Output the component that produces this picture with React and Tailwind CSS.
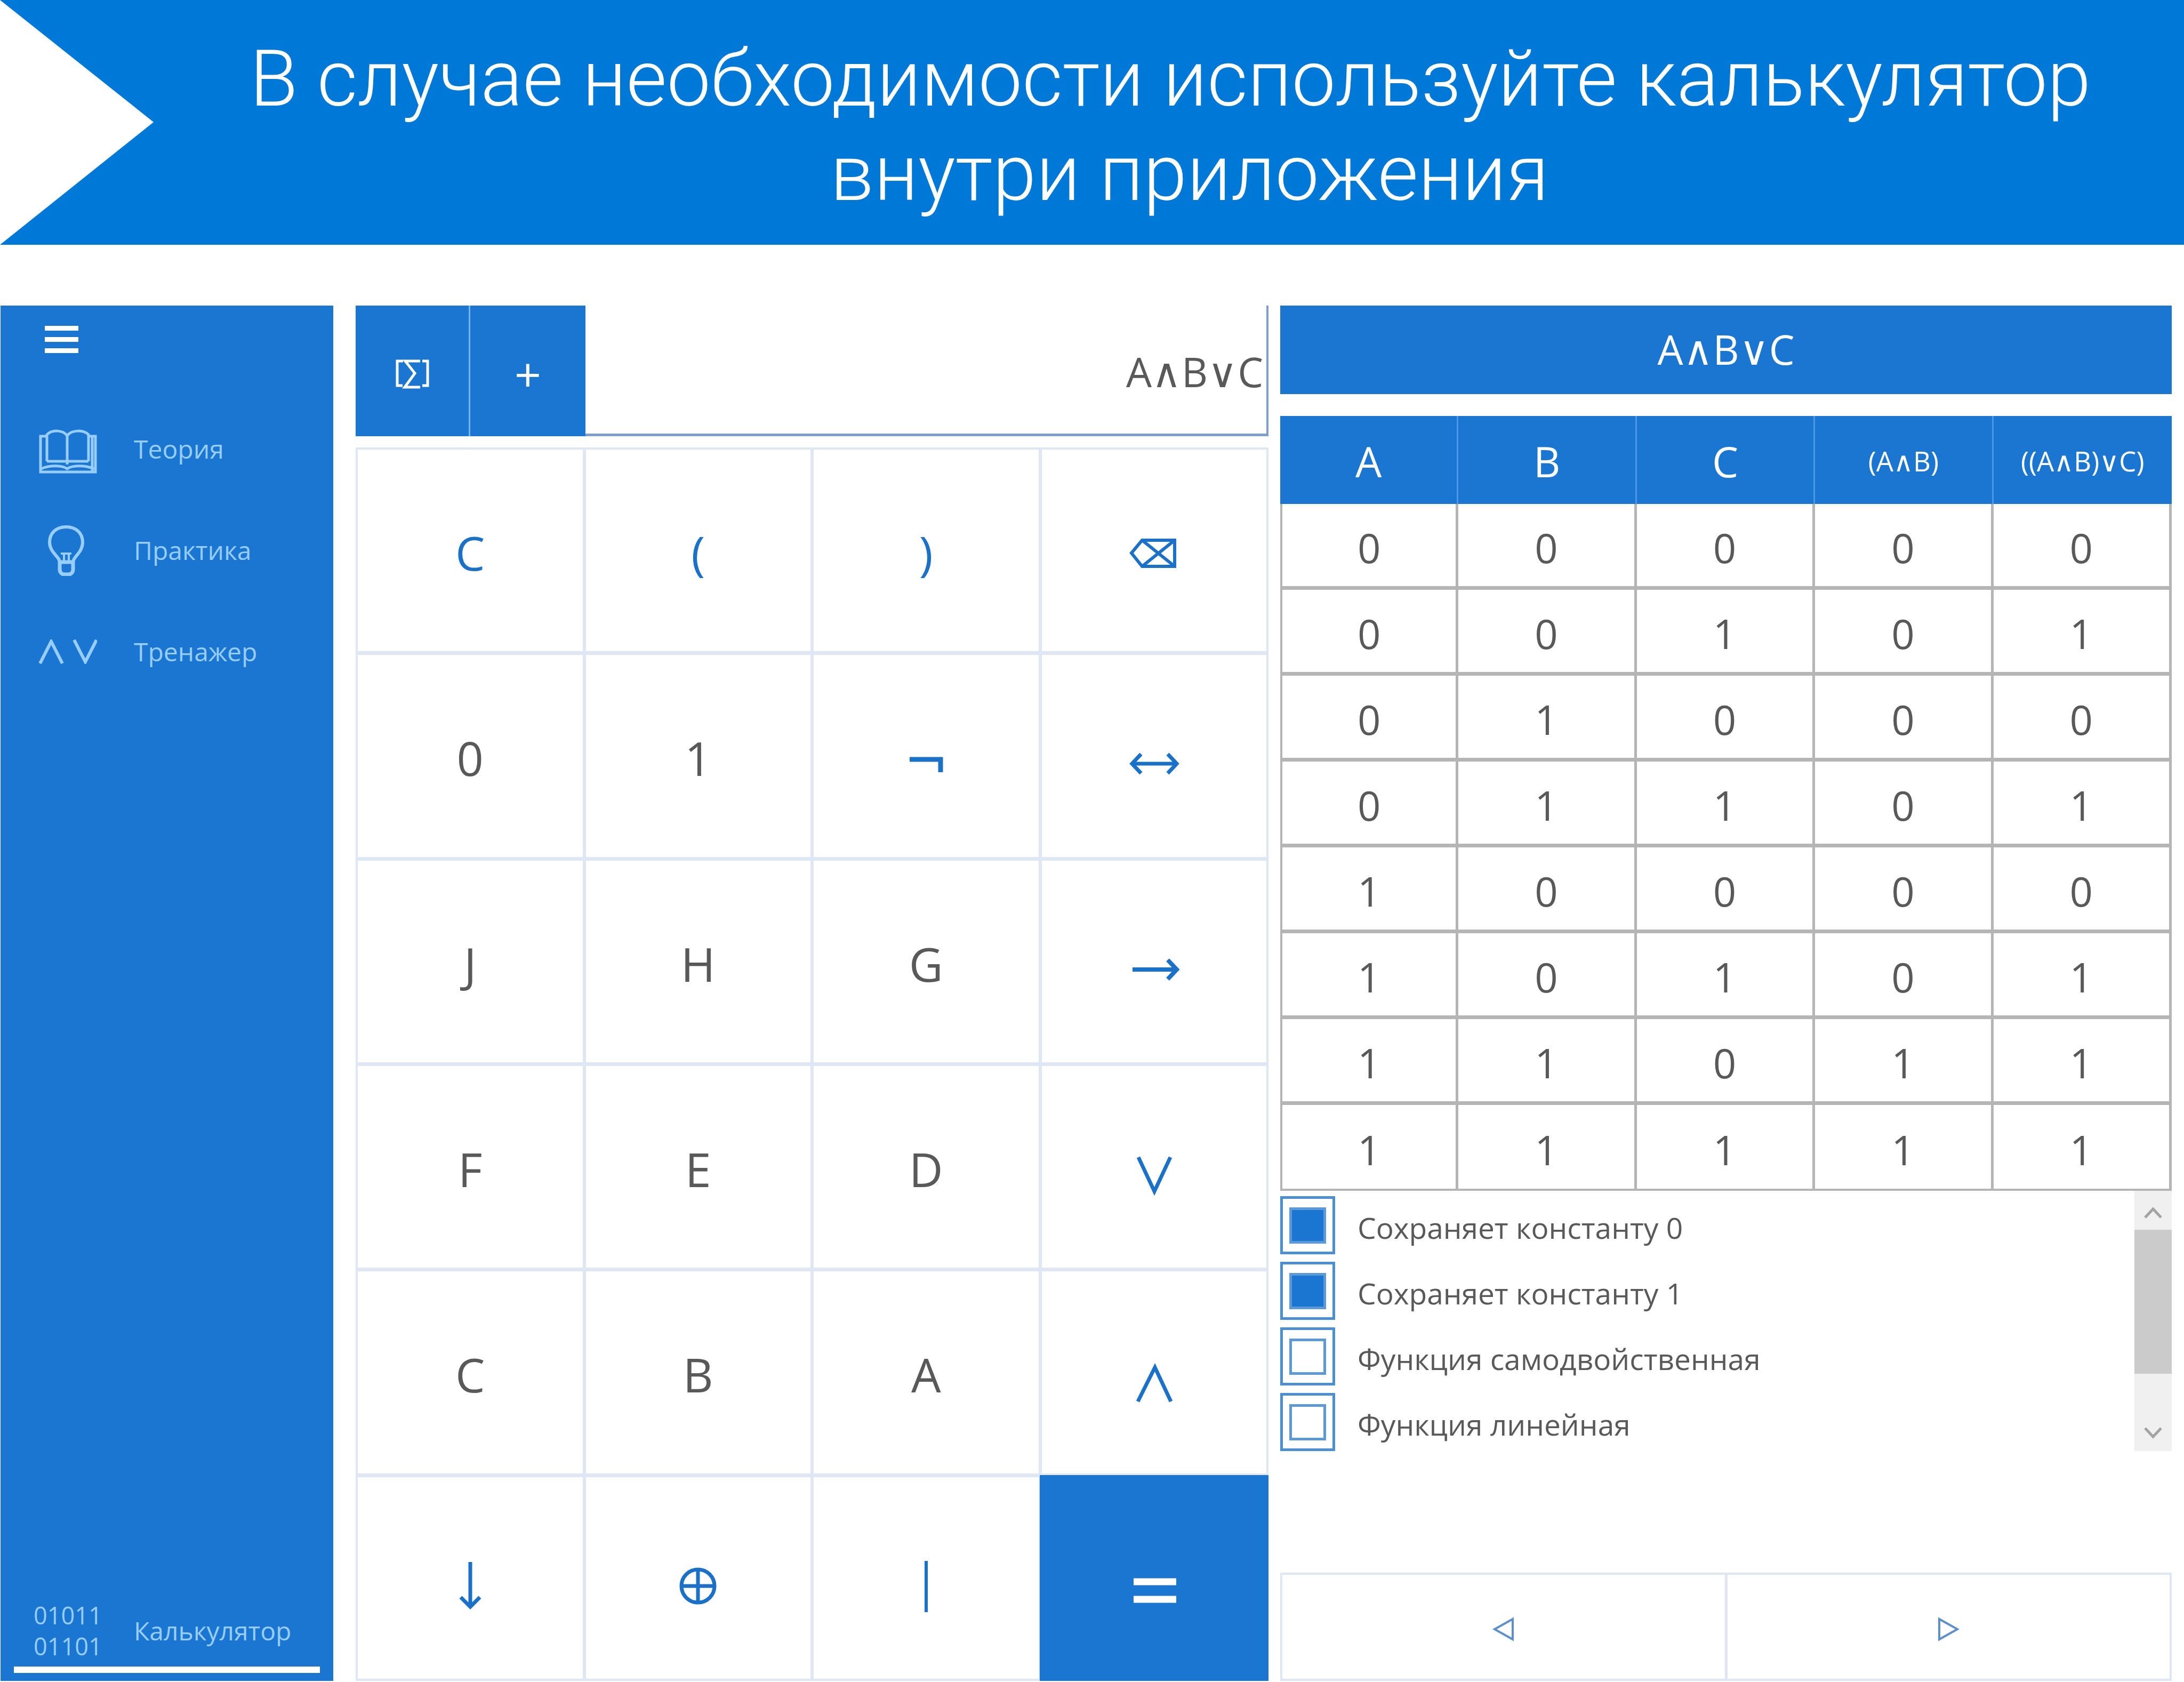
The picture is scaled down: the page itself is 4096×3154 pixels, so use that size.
import React, { useState } from "react";

/* ---------- icons ---------- */

function BookIcon() {
  return (
    <svg viewBox="0 -10 110 94" className="w-[110px] h-[94px]" fill="none" stroke="currentColor" strokeWidth="5">
      <path d="M16 60V10C26 0 46 1 54 12C62 1 84 0 94 10V60" />
      <path d="M54 12V66M16 60H94" />
      <path d="M16 13H4V80H107V13H94M101 13V80" />
      <path d="M5 74C24 66 46 68 54 74C62 68 84 66 105 74" />
    </svg>
  );
}

function BulbIcon() {
  return (
    <svg viewBox="0 0 110 96" className="w-[110px] h-[96px]" fill="none" stroke="currentColor" strokeWidth="6">
      <path d="M40 70C40 60 21 52 21 33C21 15 34 4 52 4S83 15 83 33C83 52 65 60 65 70" />
      <path d="M40 70H65V84C65 89 61 93 57 93H48C44 93 40 89 40 84Z" strokeWidth="7" />
      <path d="M42 54H62M48 70V54M57 70V54" strokeWidth="4" />
    </svg>
  );
}

function LogicIcon() {
  return (
    <svg viewBox="0 0 110 46" className="w-[110px] h-[46px]" fill="none" stroke="currentColor" strokeWidth="6">
      <path d="M3 45L24 4L45 45M67 1L88 42L109 1" />
    </svg>
  );
}

function MatrixSumIcon() {
  return (
    <svg viewBox="0 0 63 56" className="w-[63px] h-[56px]" fill="none" stroke="currentColor" strokeWidth="5">
      <path d="M14 4H3V50H13M50 4H60V50H50" />
      <path d="M46 4H18L36 27L17 53H46" />
    </svg>
  );
}

/* Operator drawings share one 120 x 120 canvas centred in the key. */
const operators = {
  backspace: <path d="M38 41H99V90H38L18 65ZM38 41L99 90M38 90L99 41" strokeWidth="6" />,
  not: <path d="M29 67H87V91" strokeWidth="9" />,
  iff: <path d="M20 75H103M36 57L19 75L36 93M86 57L103 75L86 93" />,
  implies: <path d="M20 75H103M86 57L103 75L86 93" strokeWidth="8" />,
  or: <path d="M31 42L61 106L91 42" />,
  and: <path d="M30 115L62 51L92 115" />,
  nor: <path d="M60 30V114M42 96L60 114L78 96" />,
  xor: (
    <>
      <circle cx="60" cy="75" r="31" />
      <path d="M28 75H92M60 43V107" />
    </>
  ),
  nand: <path d="M60 28V124" strokeWidth="6" />,
  equals: <path d="M22 67H102M22 100H102" strokeWidth="13" />,
};

function OperatorIcon({ name }) {
  return (
    <svg viewBox="0 0 120 120" className="size-[120px] overflow-visible" fill="none" stroke="currentColor" strokeWidth="7">
      {operators[name]}
    </svg>
  );
}

/* ---------- data ---------- */

const navItems = [
  { label: "Теория", icon: <BookIcon /> },
  { label: "Практика", icon: <BulbIcon /> },
  { label: "Тренажер", icon: <LogicIcon /> },
];

const keys = [
  { text: "C", accent: true },
  { text: "(", accent: true },
  { text: ")", accent: true },
  { icon: "backspace", label: "Стереть" },
  { text: "0" },
  { text: "1" },
  { icon: "not", label: "¬" },
  { icon: "iff", label: "↔" },
  { text: "J" },
  { text: "H" },
  { text: "G" },
  { icon: "implies", label: "→" },
  { text: "F" },
  { text: "E" },
  { text: "D" },
  { icon: "or", label: "∨" },
  { text: "C" },
  { text: "B" },
  { text: "A" },
  { icon: "and", label: "∧" },
  { icon: "nor", label: "↓" },
  { icon: "xor", label: "⊕" },
  { icon: "nand", label: "|" },
  { icon: "equals", label: "=", primary: true },
];

const rows = [0, 1, 2, 3, 4, 5, 6, 7].map((n) => {
  const a = (n >> 2) & 1;
  const b = (n >> 1) & 1;
  const c = n & 1;
  return [a, b, c, a & b, (a & b) | c];
});

const properties = [
  { label: "Сохраняет константу 0", on: true },
  { label: "Сохраняет константу 1", on: true },
  { label: "Функция самодвойственная", on: false },
  { label: "Функция линейная", on: false },
];

/* Sets the logical signs of a formula in a face that has them. */
function Formula({ value }) {
  return value.split("").map((ch, i) =>
    ch === "∧" || ch === "∨" ? (
      <span key={i} className="font-['DejaVu_Sans',sans-serif] font-extralight">{ch}</span>
    ) : (
      <React.Fragment key={i}>{ch}</React.Fragment>
    )
  );
}

/* ---------- sections ---------- */

function Banner() {
  return (
    <header className="relative bg-[#0078d7] pl-[294px] pt-[60px] pb-[45px]">
      <svg viewBox="0 0 288 459" preserveAspectRatio="none" className="absolute left-0 top-0 h-full w-[288px]" aria-hidden="true">
        <path d="M0 0L288 229L0 459Z" fill="#fff" />
      </svg>
      <h1 className="text-center font-[Roboto,sans-serif] text-[147px] font-light leading-[177px] text-white">
        <span className="block">В случае необходимости используйте калькулятор</span>
        <span className="block pl-[72px]">внутри приложения</span>
      </h1>
    </header>
  );
}

function Sidebar() {
  return (
    <nav className="flex flex-col bg-[#1b76d1] text-[48px] leading-[60px] text-[#97cdff]">
      <button type="button" aria-label="Меню" className="mt-[38px] ml-[83px] flex w-[63px] flex-col gap-[12px]">
        <span className="h-[9px] w-full bg-white" />
        <span className="h-[9px] w-full bg-white" />
        <span className="h-[9px] w-full bg-white" />
      </button>
      <ul className="mt-[85px]">
        {navItems.map((item) => (
          <li key={item.label}>
            <a href="#" className="flex h-[190px] items-center pl-[71px]">
              <span className="w-[179px]">{item.icon}</span>
              {item.label}
            </a>
          </li>
        ))}
      </ul>
      <a href="#" aria-current="page" className="mx-[25px] mt-auto mb-[15px] flex items-center border-b-[12px] border-white pb-[9px]">
        <span className="w-[225px] pl-[37px] text-[45px] leading-[58px]">
          01011
          <br />
          01101
        </span>
        Калькулятор
      </a>
    </nav>
  );
}

function Calculator() {
  return (
    <section className="ml-[42px] flex flex-col" aria-label="Калькулятор">
      <div className="flex h-[245px]">
        <button type="button" aria-label="Вставить" className="grid w-[215px] place-items-center border-r-[3px] border-[#73b8ff] bg-[#1b76d1] pt-[10px] text-white">
          <MatrixSumIcon />
        </button>
        <button type="button" className="w-[216px] bg-[#1b76d1] pt-[10px] text-[88px] text-white">+</button>
        <output className="flex flex-1 items-center justify-end border-r-[4px] border-b-[5px] border-[#7f9fcf] pr-[6px] pt-[10px] text-[76px]">
          <span><Formula value="A∧B∨C" /></span>
        </output>
      </div>
      <div className="mt-[21px] grid flex-1 grid-cols-4 grid-rows-6 gap-x-[6px] gap-y-[7px] border-[4px] border-[#dfe7f4] bg-[#dfe7f4]">
        {keys.map((key, i) =>
          key.icon ? (
            <button
              key={i}
              type="button"
              aria-label={key.label}
              className={
                key.primary
                  ? "grid place-items-center bg-[#1b76d1] text-white ring-4 ring-[#1b76d1]"
                  : "grid place-items-center bg-white text-[#1b70c8]"
              }
            >
              <OperatorIcon name={key.icon} />
            </button>
          ) : (
            <button
              key={i}
              type="button"
              className={key.accent ? "bg-white pt-[8px] text-[88px] text-[#1b70c8]" : "bg-white pt-[8px] text-[88px]"}
            >
              {key.text}
            </button>
          )
        )}
      </div>
    </section>
  );
}

function TruthTable() {
  return (
    <table className="mt-[41px] w-full table-fixed border-separate border-spacing-0 text-center">
      <thead>
        <tr className="h-[165px] bg-[#1b76d1] text-white">
          {["A", "B", "C", "(A∧B)", "((A∧B)∨C)"].map((h, i) => (
            <th
              key={h}
              scope="col"
              className={
                "border-r-[3px] border-[#4b97e6] pt-[6px] font-normal last:border-r-0 " + (i < 3 ? "text-[78px]" : "text-[51px]")
              }
            >
              <Formula value={h} />
            </th>
          ))}
        </tr>
      </thead>
      <tbody className="text-[76px] leading-[100px]">
        {rows.map((row, r) => (
          <tr key={r} className="group h-[161px]">
            {row.map((v, c) => (
              <td
                key={c}
                className="border-r-[5px] border-b-[7px] border-[#b5b5b5] pt-[10px] first:border-l-[4px] group-last:border-b-[4px]"
              >
                {v}
              </td>
            ))}
          </tr>
        ))}
      </tbody>
    </table>
  );
}

function Properties() {
  const [state, setState] = useState(properties.map((p) => p.on));
  return (
    <div className="flex justify-between">
      <ul className="flex flex-col gap-[14px] pt-[10px] text-[55px] leading-[80px]">
        {properties.map((p, i) => (
          <li key={p.label}>
            <label className="flex items-center gap-[42px]">
              <input
                type="checkbox"
                checked={state[i]}
                onChange={() => setState(state.map((s, j) => (j === i ? !s : s)))}
                className="grid h-[109px] w-[103px] appearance-none place-items-center border-[5px] border-[#4a8fd6] before:h-[68px] before:w-[69px] before:border-[5px] before:border-[#5c99d8] before:content-[''] checked:before:bg-[#1b76d1]"
              />
              <span className="pt-[8px]">{p.label}</span>
            </label>
          </li>
        ))}
      </ul>
      <div className="flex w-[70px] flex-col bg-[#f0f0f0] text-[#a3a3a3]">
        <button type="button" aria-label="Прокрутить вверх" className="grid h-[73px] place-items-center pt-[8px]">
          <svg viewBox="0 0 34 24" className="h-[24px] w-[34px]" fill="none" stroke="currentColor" strokeWidth="5">
            <path d="M2 21L17 5L32 21" />
          </svg>
        </button>
        <div className="h-[270px] bg-[#cbcbcb]" />
        <button type="button" aria-label="Прокрутить вниз" className="mt-auto grid h-[68px] place-items-center">
          <svg viewBox="0 0 34 24" className="h-[24px] w-[34px]" fill="none" stroke="currentColor" strokeWidth="5">
            <path d="M2 3L17 19L32 3" />
          </svg>
        </button>
      </div>
    </div>
  );
}

function Results() {
  return (
    <section className="ml-[22px] flex flex-col" aria-label="Таблица истинности">
      <h2 className="flex h-[166px] items-center justify-center bg-[#1b76d1] text-[76px] text-white">
        <span><Formula value="A∧B∨C" /></span>
      </h2>
      <TruthTable />
      <Properties />
      <div className="mt-auto grid h-[203px] grid-cols-2 gap-[5px] border-[4px] border-[#dfe7f4] bg-[#dfe7f4] text-[#5c8fcb]">
        <button type="button" aria-label="Назад" className="grid place-items-center bg-white pt-[8px]">
          <svg viewBox="0 0 42 46" className="h-[46px] w-[42px]" fill="none" stroke="currentColor" strokeWidth="4">
            <path d="M38 4V42L4 23Z" />
          </svg>
        </button>
        <button type="button" aria-label="Вперёд" className="grid place-items-center bg-white pt-[8px]">
          <svg viewBox="0 0 42 46" className="h-[46px] w-[42px]" fill="none" stroke="currentColor" strokeWidth="4">
            <path d="M4 4V42L38 23Z" />
          </svg>
        </button>
      </div>
    </section>
  );
}

export default function App() {
  return (
    <div className="flex min-h-screen flex-col bg-white font-['Open_Sans',sans-serif] text-[#595959]">
      <Banner />
      <main className="mt-[114px] grid flex-1 grid-cols-[624fr_1754fr_1694fr] pr-[23px] pb-[2px] pl-[1px]">
        <Sidebar />
        <Calculator />
        <Results />
      </main>
    </div>
  );
}
